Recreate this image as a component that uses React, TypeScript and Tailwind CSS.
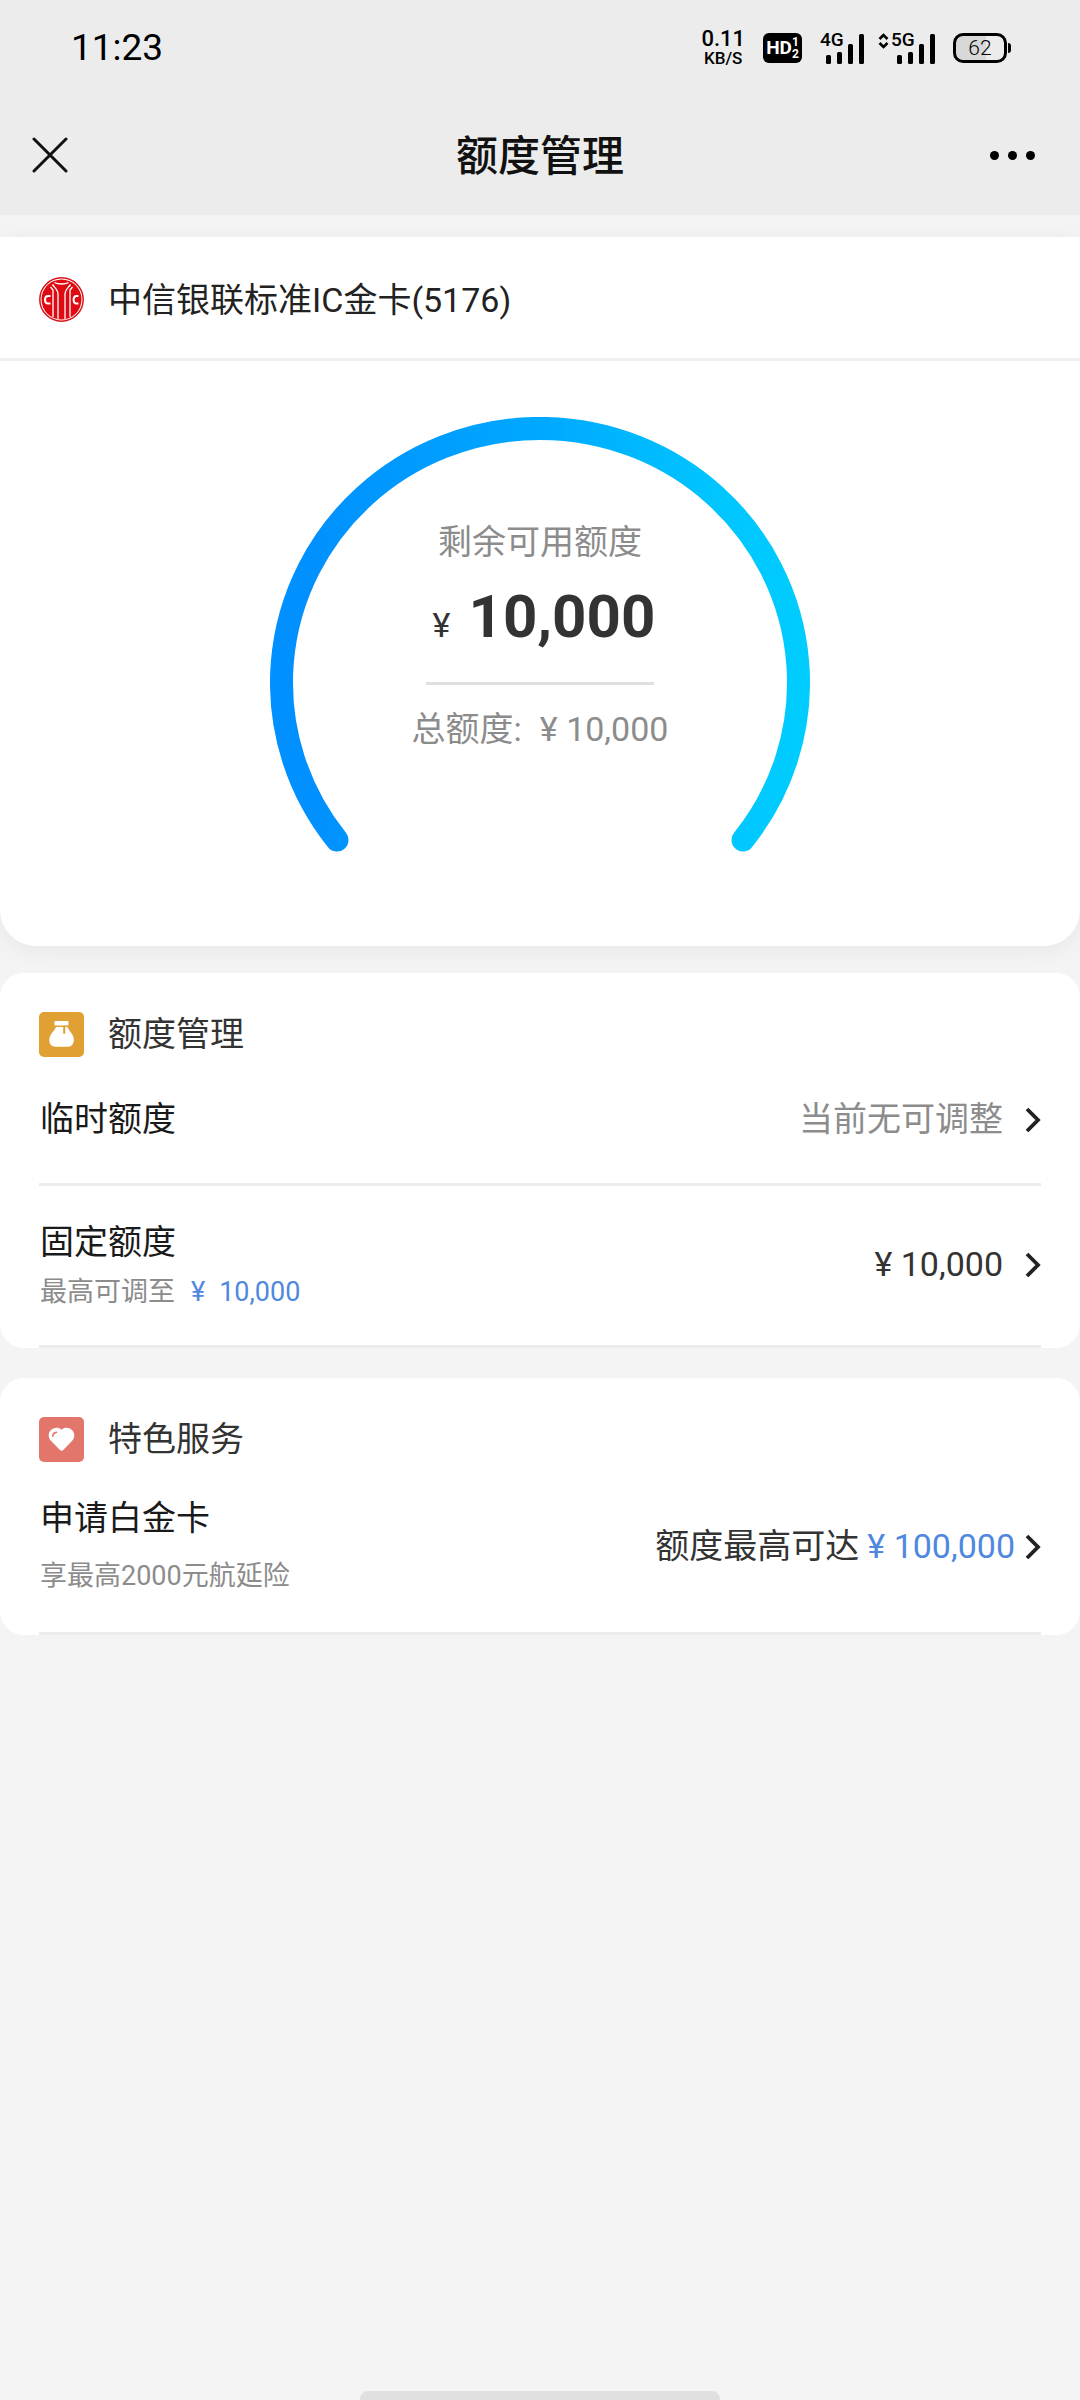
import type { ReactNode } from "react";

const BankLogo = () => (
  <svg viewBox="0 0 45 45" className="size-[45px] shrink-0" fill="none" aria-hidden="true">
    <circle cx="22.5" cy="22.5" r="21.7" fill="#fff" stroke="#d8151b" strokeWidth="1.5" />
    <circle cx="22.5" cy="22.5" r="20" fill="#df0a12" />
    <g stroke="#fff" strokeWidth="1.3">
      <path d="M14 40V13L11.5 10" />
      <path d="M31 40V13L33.5 10" />
      <path d="M19 42V17C19 13 16 11 13.5 7.5" />
      <path d="M26 42V17C26 13 29 11 31.5 7.5" />
      <path d="M15.5 5.5C19 7.5 26 7.5 29.5 5.5" />
    </g>
    <g stroke="#fff" strokeWidth="2">
      <path d="M11.5 19H9C7 19 6 20.7 6 22.7S7 26.4 9 26.4H11.5" />
      <path d="M39.5 19H37.5C35.5 19 34.6 20.7 34.6 22.7S35.5 26.4 37.5 26.4H39.5" />
    </g>
  </svg>
);

const BagIcon = () => (
  <svg viewBox="0 0 45 45" className="size-[45px] shrink-0" aria-hidden="true">
    <rect width="45" height="45" rx="5" fill="#e0a034" />
    <rect x="15.5" y="9" width="14" height="4.5" rx="1" fill="#fff" />
    <path
      d="M17 15h11.5c1 2.6 3 4.6 4.8 7.6 1.2 2.2 1.8 4.4 1.4 6.8-.5 3.4-3 5.4-6.4 5.4H16.6c-3.4 0-5.8-2-6.2-5.2-.4-2.6.3-5 1.6-7C13.8 19.6 16 17.6 17 15z"
      fill="#fff"
    />
    <path d="M25.2 14.5V21" stroke="#e0a034" strokeWidth="2" strokeLinecap="round" />
  </svg>
);

const HeartIcon = () => (
  <svg viewBox="0 0 45 45" className="size-[45px] shrink-0" aria-hidden="true">
    <rect width="45" height="45" rx="5" fill="#e3766a" />
    <path
      d="M22.5 12.7C20.5 11 18.5 10.6 16.5 10.9 12.5 11.4 9.7 14.4 9.7 18.2c0 2.4 1 4.3 2.7 6L21 33c1 .9 2.2.9 3.2 0l8.5-8.8c1.7-1.7 2.6-3.6 2.6-6 0-3.8-2.8-6.800-6.700-7.300-2.200-.3-4.200.1-6.100 1.800z"
      fill="#fff"
    />
    <path d="M13.8 19.2c.1-2.2 1.4-3.6 3.7-3.8" stroke="#e3766a" strokeWidth="1.6" strokeLinecap="round" fill="none" />
  </svg>
);

const Chevron = () => (
  <svg viewBox="0 0 16 26" className="h-[26px] w-4 shrink-0" fill="none" aria-hidden="true">
    <path d="M2 3L13 14L2 25" stroke="#222" strokeWidth="3.8" />
  </svg>
);

const Signal = ({ label }: { label: string }) => (
  <div className="grid">
    <span className="col-start-1 row-start-1 pl-0.5 text-[19px] leading-4 font-medium">{label}</span>
    <svg viewBox="0 0 46 32" className="col-start-1 row-start-1 h-8 w-[46px]" aria-hidden="true">
      <rect x="8" y="23" width="5" height="9" rx="1.5" />
      <rect x="19" y="20" width="5" height="12" rx="1.5" />
      <rect x="30" y="12" width="5" height="20" rx="1.5" />
      <rect x="41" y="2" width="5" height="30" rx="1.5" />
    </svg>
  </div>
);

const StatusBar = () => (
  <div className="flex h-[95px] items-center justify-between pr-[69px] pl-[71px] text-black">
    <span className="text-[37px] leading-[48px]">11:23</span>
    <div className="flex items-center">
      <div className="flex flex-col items-center font-medium">
        <span className="text-[22px] leading-[22px]">0.11</span>
        <span className="text-[17px] leading-[17px]">KB/S</span>
      </div>
      <div className="ml-[18px] flex h-[30px] w-[39px] items-center justify-center rounded-md bg-black text-white">
        <span className="text-[19px] leading-6 font-bold">HD</span>
        <span className="flex flex-col text-[12px] leading-3 font-bold">
          <span>1</span>
          <span>2</span>
        </span>
      </div>
      <div className="ml-4">
        <Signal label="4G" />
      </div>
      <div className="ml-[14px] flex">
        <svg viewBox="0 0 11 20" className="h-5 w-[11px]" fill="none" aria-hidden="true">
          <path d="M1.5 7L5.5 3L9.5 7M1.5 11L5.5 15L9.5 11" stroke="#000" strokeWidth="2.6" />
        </svg>
        <Signal label="5G" />
      </div>
      <div className="ml-[18px] flex items-center gap-px">
        <div className="flex h-[30px] w-[54px] items-center justify-center rounded-[10px] border-3 border-black bg-linear-to-r from-[#d8d8d8] from-62% to-transparent to-62% text-[21px] leading-6 font-light">
          62
        </div>
        <div className="h-[10px] w-[3px] rounded-r-sm bg-black" />
      </div>
    </div>
  </div>
);

const NavBar = () => (
  <div className="grid h-[120px] grid-cols-[1fr_auto_1fr] items-center px-8">
    <button type="button" aria-label="关闭" className="justify-self-start">
      <svg viewBox="0 0 36 36" className="size-9" fill="none">
        <path d="M2 2L34 34M34 2L2 34" stroke="#111" strokeWidth="3" strokeLinecap="round" />
      </svg>
    </button>
    <h1 className="pt-1 text-[42px] leading-[56px] font-medium text-[#111]">额度管理</h1>
    <button type="button" aria-label="更多" className="flex gap-[9px] justify-self-end pr-[13px]">
      <span className="size-[9px] rounded-full bg-black" />
      <span className="size-[9px] rounded-full bg-black" />
      <span className="size-[9px] rounded-full bg-black" />
    </button>
  </div>
);

const LimitGauge = () => (
  <div className="grid justify-center pt-14 pb-[93px]">
    <svg viewBox="0 0 540 436" className="col-start-1 row-start-1 h-[436px] w-[540px]" fill="none" aria-hidden="true">
      <defs>
        <linearGradient id="gauge" x1="0" y1="0.5" x2="1" y2="0.5">
          <stop offset="0.05" stopColor="#0090ff" />
          <stop offset="0.5" stopColor="#00a8ff" />
          <stop offset="0.85" stopColor="#00c6ff" />
          <stop offset="1" stopColor="#00ccff" />
        </linearGradient>
      </defs>
      <path
        d="M67 423A258.5 254.2 0 1 1 473 423"
        stroke="url(#gauge)"
        strokeWidth="23"
        strokeLinecap="round"
      />
    </svg>
    <div className="col-start-1 row-start-1 flex flex-col items-center pt-[101px] text-[34px] leading-[48px] text-[#8c8c8c]">
      <p>剩余可用额度</p>
      <p className="mt-4 flex items-baseline gap-[18px] pl-2 text-[#333]">
        <span>¥</span>
        <strong className="text-[60px] leading-[70px] font-bold">10,000</strong>
      </p>
      <div className="mt-[30px] h-[3px] w-[228px] bg-[#e0e0e0]" />
      <p className="mt-5 flex">
        总额度:<span className="ml-[18px]">¥ 10,000</span>
      </p>
    </div>
  </div>
);

type SectionProps = { icon: ReactNode; title: string; children: ReactNode };

const Section = ({ icon, title, children }: SectionProps) => (
  <section className="rounded-3xl bg-white px-[39px] pt-[39px]">
    <div className="flex items-center gap-6">
      {icon}
      <h2 className="text-[34px] leading-[45px] text-[#333]">{title}</h2>
    </div>
    {children}
  </section>
);

export default function App() {
  return (
    <div
      lang="zh-CN"
      className="flex min-h-screen flex-col bg-[#f4f4f4] font-['Roboto','Noto_Sans_CJK_SC',sans-serif]"
    >
      <header className="bg-[#ececec]">
        <StatusBar />
        <NavBar />
      </header>

      <main className="mt-[22px]">
        <section className="rounded-b-[36px] bg-white shadow-[0_4px_24px_rgba(0,0,0,0.06)]">
          <div className="flex h-[124px] items-center gap-6 border-b-3 border-[#f0f0f0] px-[39px] pt-1">
            <BankLogo />
            <span className="text-[34px] leading-[48px] text-[#222]">中信银联标准IC金卡(5176)</span>
          </div>
          <LimitGauge />
        </section>

        <div className="mt-[27px] flex flex-col gap-[30px]">
          <Section icon={<BagIcon />} title="额度管理">
            <button
              type="button"
              className="flex w-full items-center justify-between border-b-3 border-[#ececec] pt-[38px] pb-10 pl-px text-[34px] leading-[48px]"
            >
              <span className="text-[#1a1a1a]">临时额度</span>
              <span className="flex items-center gap-[22px] text-[#8c8c8c]">
                当前无可调整
                <Chevron />
              </span>
            </button>
            <button
              type="button"
              className="flex w-full items-center justify-between border-b-3 border-[#ececec] pt-8 pb-[35px] pl-px text-left text-[34px] leading-[48px]"
            >
              <span className="flex flex-col text-[#1a1a1a]">
                固定额度
                <span className="mt-2 flex text-[27px] leading-9 text-[#8c8c8c]">
                  最高可调至
                  <span className="ml-4 flex gap-[14px] text-[#5088e0]">
                    <span>¥</span>
                    <span>10,000</span>
                  </span>
                </span>
              </span>
              <span className="flex items-center gap-[22px] text-[#333]">
                ¥ 10,000
                <Chevron />
              </span>
            </button>
          </Section>

          <Section icon={<HeartIcon />} title="特色服务">
            <button
              type="button"
              className="flex w-full items-center justify-between border-b-3 border-[#ececec] pt-8 pb-[38px] pl-px text-left text-[34px] leading-[48px]"
            >
              <span className="flex flex-col text-[#1a1a1a]">
                申请白金卡
                <span className="mt-4 text-[27px] leading-9 text-[#8c8c8c]">享最高2000元航延险</span>
              </span>
              <span className="flex items-center gap-[10px] pt-1 text-[#333]">
                <span className="flex gap-2">
                  额度最高可达
                  <span className="text-[#5088e0]">¥ 100,000</span>
                </span>
                <Chevron />
              </span>
            </button>
          </Section>
        </div>
      </main>

      <div className="mx-auto mt-auto h-[9px] w-1/3 rounded-t-lg bg-[#e0e0e0]" />
    </div>
  );
}
